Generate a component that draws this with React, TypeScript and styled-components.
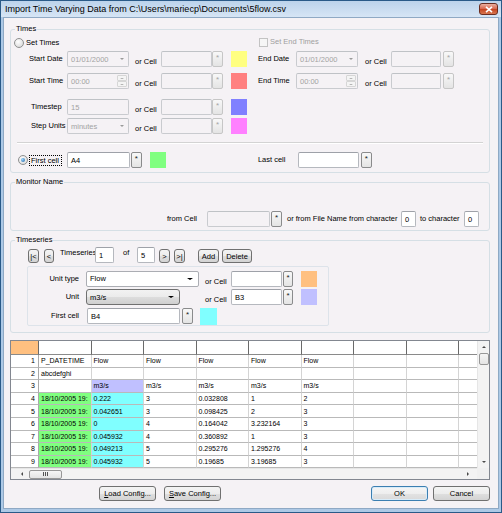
import styled, { createGlobalStyle, css } from "styled-components";

const GlobalStyle = createGlobalStyle`
  html, body { margin: 0; padding: 0; background: #fff; }
  body {
    font-family: "Liberation Sans", Arial, sans-serif;
    font-size: 7.5px;
    color: #000;
  }
`;

const Window = styled.div`
  width: 502px;
  height: 513px;
  box-sizing: border-box;
  border: 1px solid #2a5a88;
  background: #adc9e6;
  display: flex;
  flex-direction: column;
`;

const TitleBar = styled.div`
  flex: none;
  height: 16px;
  display: flex;
  align-items: center;
  justify-content: space-between;
  padding: 0 3px 0 4px;
  background: linear-gradient(#bcd3eb, #d6e5f5);
  font-size: 9px;
`;

const CloseBtn = styled.div`
  width: 19px;
  height: 12px;
  box-sizing: border-box;
  border: 1px solid #6b2d20;
  border-radius: 3px;
  background: linear-gradient(#eab0a0, #d8644a 50%, #c4421f 51%, #d8764f);
  display: flex;
  align-items: center;
  justify-content: center;
`;

const Body = styled.div`
  flex: 1;
  margin: 0 2px 3px;
  border: 1px solid #8fa9c4;
  background: #f5f2f5;
  padding: 6px 8px 0 6px;
  display: flex;
  flex-direction: column;
`;

const Group = styled.fieldset<{ $mt?: number }>`
  margin: ${(p) => p.$mt ?? 0}px 0 0;
  padding: 0;
  min-width: 0;
  border: 1px solid #d5dfe5;
  border-radius: 3px;
`;

const Caption = styled.legend`
  margin-left: 4px;
  padding: 0 1px;
  line-height: 10px;
  font-size: 7.5px;
`;

const TimesTop = styled.div`
  display: grid;
  grid-template-columns: 244px 1fr;
`;

const Col = styled.div`
  display: flex;
  flex-direction: column;
  padding-left: 3px;
`;

const Row = styled.div<{ $mt?: number; $pl?: number; $h?: number; $pb?: number }>`
  display: flex;
  align-items: center;
  height: ${(p) => p.$h ?? 16}px;
  margin-top: ${(p) => p.$mt ?? 0}px;
  padding-left: ${(p) => p.$pl ?? 0}px;
  margin-bottom: ${(p) => p.$pb ?? 0}px;
`;

const Label = styled.span<{ $w?: number; $ml?: number; $right?: boolean; $top?: boolean; $dim?: boolean }>`
  flex: none;
  box-sizing: border-box;
  width: ${(p) => (p.$w ? `${p.$w}px` : "auto")};
  margin-left: ${(p) => p.$ml ?? 0}px;
  text-align: ${(p) => (p.$right ? "right" : "left")};
  white-space: nowrap;
  line-height: 10px;
  color: ${(p) => (p.$dim ? "#a0a0a0" : "#000")};
  ${(p) => p.$top && css`align-self: flex-start; margin-top: 1px;`}
`;

const OrCell = styled.span<{ $ml?: number; $w?: number }>`
  flex: none;
  align-self: flex-end;
  box-sizing: border-box;
  width: ${(p) => p.$w ?? 26}px;
  margin-left: ${(p) => p.$ml ?? 0}px;
  line-height: 10px;
  white-space: nowrap;
`;

const FocusLabel = styled.span`
  flex: none;
  margin-left: 1px;
  line-height: 9px;
  border: 1px dotted #000;
  padding: 0 2px 0 1px;
  white-space: nowrap;
`;

const TextBox = styled.div<{ $w: number; $ml?: number; $h?: number; $disabled?: boolean }>`
  flex: none;
  box-sizing: border-box;
  width: ${(p) => p.$w}px;
  height: ${(p) => p.$h ?? 16}px;
  margin-left: ${(p) => p.$ml ?? 0}px;
  border: 1px solid ${(p) => (p.$disabled ? "#c9cbcf" : "#b5b8be")};
  border-top-color: ${(p) => (p.$disabled ? "#bfc2c6" : "#9ea1a8")};
  border-radius: 2px;
  background: ${(p) => (p.$disabled ? "#f5f2f5" : "#fff")};
  color: ${(p) => (p.$disabled ? "#a3a3a3" : "#000")};
  display: flex;
  align-items: center;
  padding-left: 3px;
  white-space: nowrap;
  overflow: hidden;
`;

const BoxText = styled.span`
  flex: 1;
`;

const Caret = styled.span<{ $color?: string; $size?: number; $mr?: number }>`
  flex: none;
  width: 0;
  height: 0;
  margin-right: ${(p) => p.$mr ?? 0}px;
  border-left: ${(p) => p.$size ?? 2.5}px solid transparent;
  border-right: ${(p) => p.$size ?? 2.5}px solid transparent;
  border-top: ${(p) => (p.$size ?? 2.5) * 0.8}px solid ${(p) => p.$color ?? "#000"};
`;

const Spin = styled.div`
  flex: none;
  width: 11px;
  height: 100%;
  display: flex;
  flex-direction: column;
  padding: 1px 1px 1px 0;
  box-sizing: border-box;
`;

const SpinHalf = styled.div<{ $up?: boolean }>`
  flex: 1;
  box-sizing: border-box;
  border: 1px solid #d6d6d6;
  border-radius: 1px;
  background: #f4f4f4;
  display: flex;
  align-items: center;
  justify-content: center;
  ${(p) => p.$up && css`& > span { transform: rotate(180deg); }`}
`;

const Star = styled.div<{ $w?: number; $ml?: number; $disabled?: boolean }>`
  flex: none;
  box-sizing: border-box;
  width: ${(p) => p.$w ?? 11}px;
  height: 16px;
  margin-left: ${(p) => p.$ml ?? 0}px;
  border: 1px solid ${(p) => (p.$disabled ? "#c6c6c6" : "#8a8b8c")};
  border-radius: 2px;
  background: linear-gradient(#f8f8f8, #e4e4e4);
  color: ${(p) => (p.$disabled ? "#a6a6a6" : "#222")};
  font-size: 8px;
  line-height: 11px;
  text-align: center;
`;

const Swatch = styled.div<{ $c: string; $ml?: number; $w?: number; $h?: number }>`
  flex: none;
  width: ${(p) => p.$w ?? 16}px;
  height: ${(p) => p.$h ?? 16}px;
  margin-left: ${(p) => p.$ml ?? 0}px;
  background: ${(p) => p.$c};
`;

const Radio = styled.span<{ $checked?: boolean; $ml?: number }>`
  flex: none;
  position: relative;
  box-sizing: border-box;
  width: 10px;
  height: 10px;
  margin-left: ${(p) => p.$ml ?? 0}px;
  border-radius: 50%;
  border: 1px solid #8e8f8f;
  background: radial-gradient(circle at 40% 35%, #ffffff, #d2d2d2);
  ${(p) =>
    p.$checked &&
    css`
      &::after {
        content: "";
        position: absolute;
        left: 2px;
        top: 2px;
        width: 4px;
        height: 4px;
        border-radius: 50%;
        background: radial-gradient(circle at 35% 35%, #9ad6ff, #1b5f9f);
      }
    `}
`;

const Check = styled.span`
  flex: none;
  box-sizing: border-box;
  width: 9px;
  height: 9px;
  margin-left: 1px;
  margin-right: 1px;
  border: 1px solid #c3c3c3;
  background: #f6f6f6;
`;

const Separator = styled.div`
  margin: 8px 6px 0;
  height: 0;
  border-top: 1px solid #d3d3d3;
  border-bottom: 1px solid #ffffff;
`;

const Dropdown = styled.div<{ $w: number; $ml?: number; $combo?: boolean; $h?: number }>`
  flex: none;
  box-sizing: border-box;
  width: ${(p) => p.$w}px;
  height: ${(p) => p.$h ?? 16}px;
  margin-left: ${(p) => p.$ml ?? 0}px;
  display: flex;
  align-items: center;
  padding: 0 5px 0 3px;
  border: 1px solid #abadb3;
  border-radius: 2px;
  background: #fff;
  ${(p) =>
    p.$combo &&
    css`
      border-color: #707070;
      border-radius: 3px;
      background: linear-gradient(#f2f2f2, #ebebeb 50%, #dddddd 51%, #cfcfcf);
    `}
`;

const InnerPanel = styled.div`
  box-sizing: border-box;
  width: 302px;
  margin: 3px 0 6px 16px;
  padding: 3px 0 1px;
  border: 1px solid #dde3ea;
  border-radius: 2px;
`;

const Button = styled.button<{ $w: number; $h?: number; $ml?: number; $default?: boolean }>`
  flex: none;
  box-sizing: border-box;
  width: ${(p) => p.$w}px;
  height: ${(p) => p.$h ?? 15}px;
  margin: 0 0 0 ${(p) => p.$ml ?? 0}px;
  padding: 0;
  font: inherit;
  font-size: 7.5px;
  color: #000;
  border: 1px solid #707070;
  border-radius: 3px;
  background: linear-gradient(#f4f4f4, #ececec 50%, #dfdfdf 51%, #d3d3d3);
  display: flex;
  align-items: center;
  justify-content: center;
  white-space: nowrap;
  ${(p) =>
    p.$default &&
    css`
      border-color: #3c7fb1;
      box-shadow: inset 0 0 0 1px #d8ecf9;
      background: linear-gradient(#f6f6f6, #eeeeee 50%, #e3e3e3 51%, #d9d9d9);
    `}
`;

const NavRow = styled(Row)`
  & > button {
    align-self: flex-end;
  }
`;

const GridFrame = styled.div`
  margin-top: 7px;
  height: 140px;
  box-sizing: border-box;
  border: 1px solid #828790;
  display: grid;
  grid-template-columns: 1fr 12px;
  grid-template-rows: 1fr 11px;
  background: #fff;
  overflow: hidden;
`;

const Sheet = styled.div`
  display: grid;
  grid-template-columns: 28px repeat(8, 52.5px) 19px;
  grid-template-rows: 14px repeat(9, 12.6px);
  overflow: hidden;
  min-width: 0;
  min-height: 0;
`;

type CellKind = "corner" | "head" | "num" | "data";

const Cell = styled.div<{ $kind: CellKind; $bg?: string }>`
  box-sizing: border-box;
  min-width: 0;
  display: flex;
  align-items: center;
  font-size: 7px;
  white-space: nowrap;
  overflow: hidden;
  background: ${(p) => p.$bg ?? (p.$kind === "corner" ? "#ffc080" : "#fff")};
  border-right: 1px solid
    ${(p) => (p.$kind === "head" || p.$kind === "corner" ? "#6a6a6a" : p.$kind === "num" ? "#a9a9a9" : "#d4d4d4")};
  border-bottom: 1px solid
    ${(p) => (p.$kind === "head" || p.$kind === "corner" ? "#8a8a8a" : "#b9b9b9")};
  justify-content: ${(p) => (p.$kind === "num" ? "flex-end" : "flex-start")};
  padding: ${(p) => (p.$kind === "num" ? "0 3px 0 0" : "0 0 0 2px")};
`;

const VScroll = styled.div`
  display: flex;
  flex-direction: column;
  align-items: center;
  background: #f3f3f3;
  border-left: 1px solid #e6e6e6;
  min-height: 0;
`;

const HScroll = styled.div`
  display: flex;
  align-items: center;
  background: #f3f3f3;
  border-top: 1px solid #e6e6e6;
  padding: 0 4px 0 5px;
`;

const ScrollCorner = styled.div`
  background: #f0f0f0;
`;

const ArrowSlot = styled.div<{ $h?: number; $w?: number }>`
  flex: none;
  width: ${(p) => p.$w ?? 11}px;
  height: ${(p) => p.$h ?? 11}px;
  display: flex;
  align-items: center;
  justify-content: center;
`;

const Arrow = styled.span<{ $dir: "up" | "down" | "left" | "right" }>`
  width: 0;
  height: 0;
  border: 2px solid transparent;
  ${(p) => p.$dir === "up" && css`border-bottom: 2px solid #4a4a4a; margin-top: -2px;`}
  ${(p) => p.$dir === "down" && css`border-top: 2px solid #4a4a4a; margin-bottom: -2px;`}
  ${(p) => p.$dir === "left" && css`border-right: 2px solid #4a4a4a; margin-left: -2px;`}
  ${(p) => p.$dir === "right" && css`border-left: 2px solid #4a4a4a; margin-right: -2px;`}
`;

const Thumb = styled.div<{ $w: number; $h: number; $ml?: number; $mt?: number }>`
  flex: none;
  box-sizing: border-box;
  width: ${(p) => p.$w}px;
  height: ${(p) => p.$h}px;
  margin-left: ${(p) => p.$ml ?? 0}px;
  margin-top: ${(p) => p.$mt ?? 0}px;
  border: 1px solid #979797;
  border-radius: 2px;
  background: linear-gradient(#f5f5f5, #e4e4e4);
  display: flex;
  align-items: center;
  justify-content: center;
  gap: 1px;
`;

const GripLine = styled.span`
  width: 1px;
  height: 4px;
  background: #555;
`;

const Spacer = styled.div`
  flex: 1;
`;

const ButtonBar = styled.div`
  margin-top: 6px;
  display: flex;
  justify-content: space-between;
  padding-left: 89px;
`;

const ButtonGroup = styled.div<{ $gap: number }>`
  display: flex;
  gap: ${(p) => p.$gap}px;
`;

const DateBox = ({ w, value, ml }: { w: number; value: string; ml?: number }) => (
  <TextBox $w={w} $ml={ml} $disabled>
    <BoxText>{value}</BoxText>
    <Caret $color="#9a9a9a" $size={2.5} $mr={4} />
  </TextBox>
);

const TimeBox = ({ w, value }: { w: number; value: string }) => (
  <TextBox $w={w} $disabled>
    <BoxText>{value}</BoxText>
    <Spin>
      <SpinHalf $up>
        <Caret $color="#a0a0a0" $size={2} />
      </SpinHalf>
      <SpinHalf>
        <Caret $color="#a0a0a0" $size={2} />
      </SpinHalf>
    </Spin>
  </TextBox>
);

const CellRef = ({ color }: { color: string }) => (
  <>
    <OrCell $ml={6}>or Cell</OrCell>
    <TextBox $w={51} $disabled />
    <Star $disabled>*</Star>
    <Swatch $c={color} $ml={8} />
  </>
);

const EndCellRef = () => (
  <>
    <OrCell $ml={7}>or Cell</OrCell>
    <TextBox $w={50} $disabled />
    <Star $ml={2} $disabled>*</Star>
  </>
);

const DATE = "18/10/2005 19:";
const sheetRows: { v: string; bg?: string }[][] = [
  [{ v: "P_DATETIME" }, { v: "Flow" }, { v: "Flow" }, { v: "Flow" }, { v: "Flow" }, { v: "Flow" }],
  [{ v: "abcdefghi" }],
  [{ v: "" }, { v: "m3/s", bg: "#c0c0ff" }, { v: "m3/s" }, { v: "m3/s" }, { v: "m3/s" }, { v: "m3/s" }],
  ...[
    ["0.222", "3", "0.032808", "1", "2"],
    ["0.042651", "3", "0.098425", "2", "3"],
    ["0", "4", "0.164042", "3.232164", "3"],
    ["0.045932", "4", "0.360892", "1", "3"],
    ["0.049213", "5", "0.295276", "1.295276", "4"],
    ["0.045932", "5", "0.19685", "3.19685", "3"],
  ].map(([a, b, c, d, e]) => [
    { v: DATE, bg: "#80ff80" },
    { v: a, bg: "#80ffff" },
    { v: b },
    { v: c },
    { v: d },
    { v: e },
  ]),
];

const DATA_COLS = 9;

const Spreadsheet = () => (
  <GridFrame>
    <Sheet>
      <Cell $kind="corner" />
      {Array.from({ length: DATA_COLS }, (_, i) => (
        <Cell key={`h${i}`} $kind="head" />
      ))}
      {sheetRows.map((row, r) => [
        <Cell key={`n${r}`} $kind="num">
          {r + 1}
        </Cell>,
        ...Array.from({ length: DATA_COLS }, (_, c) => (
          <Cell key={`c${r}-${c}`} $kind="data" $bg={row[c]?.bg}>
            {row[c]?.v ?? ""}
          </Cell>
        )),
      ])}
    </Sheet>
    <VScroll>
      <ArrowSlot $h={12}>
        <Arrow $dir="up" />
      </ArrowSlot>
      <Thumb $w={10} $h={12} />
      <Spacer />
      <ArrowSlot $h={12}>
        <Arrow $dir="down" />
      </ArrowSlot>
    </VScroll>
    <HScroll>
      <ArrowSlot>
        <Arrow $dir="left" />
      </ArrowSlot>
      <Thumb $w={33} $h={9} $ml={2}>
        <GripLine />
        <GripLine />
        <GripLine />
      </Thumb>
      <Spacer />
      <ArrowSlot>
        <Arrow $dir="right" />
      </ArrowSlot>
    </HScroll>
    <ScrollCorner />
  </GridFrame>
);

export default function App() {
  return (
    <>
      <GlobalStyle />
      <Window>
        <TitleBar>
          <span>Import Time Varying Data from C:\Users\mariecp\Documents\5flow.csv</span>
          <CloseBtn>
            <svg width="8" height="7" viewBox="0 0 8 7">
              <path d="M1 0.8 L7 6.2 M7 0.8 L1 6.2" stroke="#fff" strokeWidth="1.6" />
            </svg>
          </CloseBtn>
        </TitleBar>
        <Body>
          <Group>
            <Caption>Times</Caption>
            <TimesTop>
              <Col>
                <Row $mt={4} $h={10}>
                  <Radio />
                  <Label $ml={2}>Set Times</Label>
                </Row>
                <Row $mt={3} $pl={15}>
                  <Label $w={38}>Start Date</Label>
                  <DateBox w={62} value="01/01/2000" />
                  <CellRef color="#ffff80" />
                </Row>
                <Row $mt={6} $pl={15}>
                  <Label $w={38}>Start Time</Label>
                  <TimeBox w={62} value="00:00" />
                  <CellRef color="#ff8080" />
                </Row>
                <Row $mt={10} $pl={17}>
                  <Label $w={36}>Timestep</Label>
                  <TextBox $w={62} $disabled>
                    15
                  </TextBox>
                  <CellRef color="#8080ff" />
                </Row>
                <Row $mt={3} $pl={17}>
                  <Label $w={36}>Step Units</Label>
                  <DateBox w={62} value="minutes" />
                  <CellRef color="#ff80ff" />
                </Row>
              </Col>
              <Col>
                <Row $mt={3} $h={10}>
                  <Check />
                  <Label $ml={1} $dim>
                    Set End Times
                  </Label>
                </Row>
                <Row $mt={4}>
                  <Label $w={38}>End Date</Label>
                  <DateBox w={62} value="01/01/2000" />
                  <EndCellRef />
                </Row>
                <Row $mt={6}>
                  <Label $w={38}>End Time</Label>
                  <TimeBox w={62} value="00:00" />
                  <EndCellRef />
                </Row>
              </Col>
            </TimesTop>
            <Separator />
            <Row $mt={8} $pl={7} $pb={4}>
              <Radio $checked />
              <FocusLabel>First cell</FocusLabel>
              <TextBox $w={63} $ml={5}>
                A4
              </TextBox>
              <Star $ml={1}>*</Star>
              <Swatch $c="#80ff80" $ml={8} />
              <Label $w={40} $ml={92}>
                Last cell
              </Label>
              <TextBox $w={61} />
              <Star $ml={2}>*</Star>
            </Row>
          </Group>

          <Group $mt={4}>
            <Caption>Monitor Name</Caption>
            <Row $mt={24} $pl={156} $pb={3}>
              <Label $w={40}>from Cell</Label>
              <TextBox $w={63} $disabled />
              <Star $ml={1}>*</Star>
              <Label $w={114} $ml={5}>
                or from File Name from character
              </Label>
              <TextBox $w={15}>0</TextBox>
              <Label $w={44} $ml={4}>
                to character
              </Label>
              <TextBox $w={15}>0</TextBox>
            </Row>
          </Group>

          <Group $mt={4}>
            <Caption>Timeseries</Caption>
            <NavRow $mt={2} $pl={17}>
              <Button $w={11} $h={14}>|&lt;</Button>
              <Button $w={10} $h={14} $ml={5}>
                &lt;
              </Button>
              <Label $w={35} $ml={6} $top>
                Timeseries
              </Label>
              <TextBox $w={19}>1</TextBox>
              <Label $w={14} $ml={9} $top>
                of
              </Label>
              <TextBox $w={18}>5</TextBox>
              <Button $w={11} $h={14} $ml={4}>
                &gt;
              </Button>
              <Button $w={11} $h={14} $ml={4}>
                &gt;|
              </Button>
              <Button $w={21} $h={14} $ml={13}>
                Add
              </Button>
              <Button $w={30} $h={14} $ml={3}>
                Delete
              </Button>
            </NavRow>
            <InnerPanel>
              <Row $h={17}>
                <Label $w={51} $right>
                  Unit type
                </Label>
                <Dropdown $w={113} $ml={7}>
                  <BoxText>Flow</BoxText>
                  <Caret $size={3} />
                </Dropdown>
                <OrCell $ml={6}>or Cell</OrCell>
                <TextBox $w={51} />
                <Star $w={10} $ml={1}>*</Star>
                <Swatch $c="#ffc080" $ml={8} />
              </Row>
              <Row $mt={2}>
                <Label $w={51} $right>
                  Unit
                </Label>
                <Dropdown $w={94} $ml={7} $combo>
                  <BoxText>m3/s</BoxText>
                  <Caret $size={3} />
                </Dropdown>
                <OrCell $ml={25}>or Cell</OrCell>
                <TextBox $w={51}>B3</TextBox>
                <Star $w={10} $ml={1}>*</Star>
                <Swatch $c="#c0c0ff" $ml={8} />
              </Row>
              <Row $mt={3}>
                <Label $w={51} $right>
                  First cell
                </Label>
                <TextBox $w={93} $ml={8}>
                  B4
                </TextBox>
                <Star $ml={2}>*</Star>
                <Swatch $c="#80ffff" $ml={7} $w={17} $h={17} />
              </Row>
            </InnerPanel>
          </Group>

          <Spreadsheet />

          <ButtonBar>
            <ButtonGroup $gap={8}>
              <Button $w={57}>
                <u>L</u>oad Config...
              </Button>
              <Button $w={57}>
                <u>S</u>ave Config...
              </Button>
            </ButtonGroup>
            <ButtonGroup $gap={5}>
              <Button $w={57} $default>
                OK
              </Button>
              <Button $w={57}>Cancel</Button>
            </ButtonGroup>
          </ButtonBar>
        </Body>
      </Window>
    </>
  );
}
